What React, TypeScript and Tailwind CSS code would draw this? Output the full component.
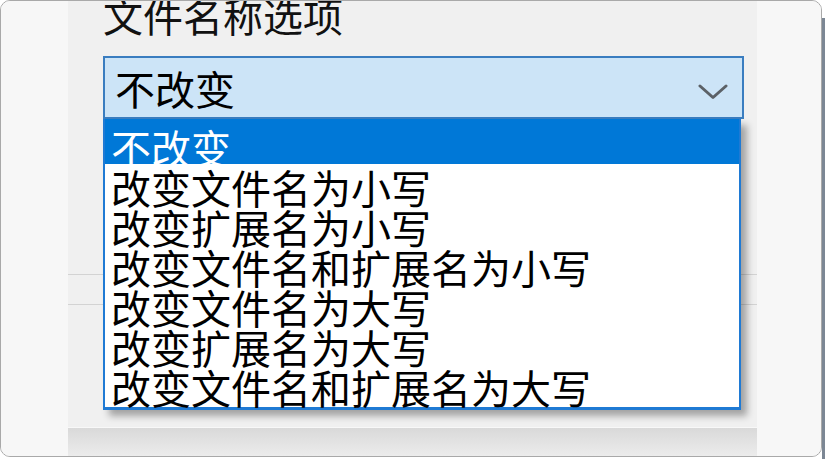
import { useState } from "react";

const OPTIONS = [
  "不改变",
  "改变文件名为小写",
  "改变扩展名为小写",
  "改变文件名和扩展名为小写",
  "改变文件名为大写",
  "改变扩展名为大写",
  "改变文件名和扩展名为大写",
];

const cjk = "font-['Noto_Sans_CJK_SC','Noto_Sans',sans-serif]";

function Chevron() {
  return (
    <svg width="30" height="16" viewBox="0 0 30 16" fill="none" aria-hidden>
      <polyline
        points="2,2 15,13.5 28,2"
        stroke="#5b6167"
        strokeWidth="3"
        strokeLinecap="round"
        strokeLinejoin="round"
      />
    </svg>
  );
}

export default function App() {
  const [selected] = useState(0);

  return (
    <div className={`flex h-[459px] w-[825px] overflow-hidden bg-white ${cjk}`}>
      {/* Dialog window */}
      <div className="flex h-[457px] w-[822px] overflow-hidden rounded-[10px] border border-[#a9a9a9] bg-[#f7f7f7]">
        <div className="w-[67px] shrink-0 bg-[#f7f7f7]" />

        {/* Dialog body */}
        <div className="relative flex w-[689px] shrink-0 flex-col bg-[#f0f0f0]">
          <div className="mt-[-6px] pl-[35px] text-[40px] leading-[40px] text-[#111]">
            文件名称选项
          </div>

          {/* Combobox */}
          <div className="ml-[35px] mt-[21px] flex h-[63px] w-[641px] items-start justify-between border-2 border-[#3a7dc0] bg-[#cce4f7] pl-[10px] pr-[14px] pt-[10px]">
            <span className="text-[40px] leading-[40px] text-black">{OPTIONS[selected]}</span>
            <span className="mt-[16px]">
              <Chevron />
            </span>
          </div>

          {/* Separator lines under the open list */}
          <div className="mt-[155px] h-[31px] border-t border-b border-[#d3d3d3]" />
          <div className="flex-1" />
          <div className="h-px bg-[#f8f8f8]" />
          <div className="h-[28px] bg-gradient-to-b from-[#d9d9d9] to-[#ececec]" />

          {/* Open dropdown list */}
          <div className="absolute left-[35px] top-[118px] w-[638px] border-x-2 border-b-[3px] border-[#1f7ad4] bg-white pb-[3px] shadow-[6px_6px_7px_rgba(0,0,0,0.32)]">
            {OPTIONS.map((opt, i) =>
              i === selected ? (
                <div
                  key={opt}
                  className="h-[45px] overflow-hidden bg-[#0078d7] pl-[6px] pt-[8px] text-[40px] leading-[40px] text-white"
                >
                  {opt}
                </div>
              ) : (
                <div
                  key={opt}
                  className="h-[40px] whitespace-nowrap pl-[6px] pt-[3px] text-[40px] leading-[40px] text-black"
                >
                  {opt}
                </div>
              )
            )}
          </div>
        </div>

        <div className="flex-1 bg-[#f7f7f7]" />
      </div>
      <div className="mt-[18px] h-[441px] w-[3px] bg-[#7c8794]" />
    </div>
  );
}
